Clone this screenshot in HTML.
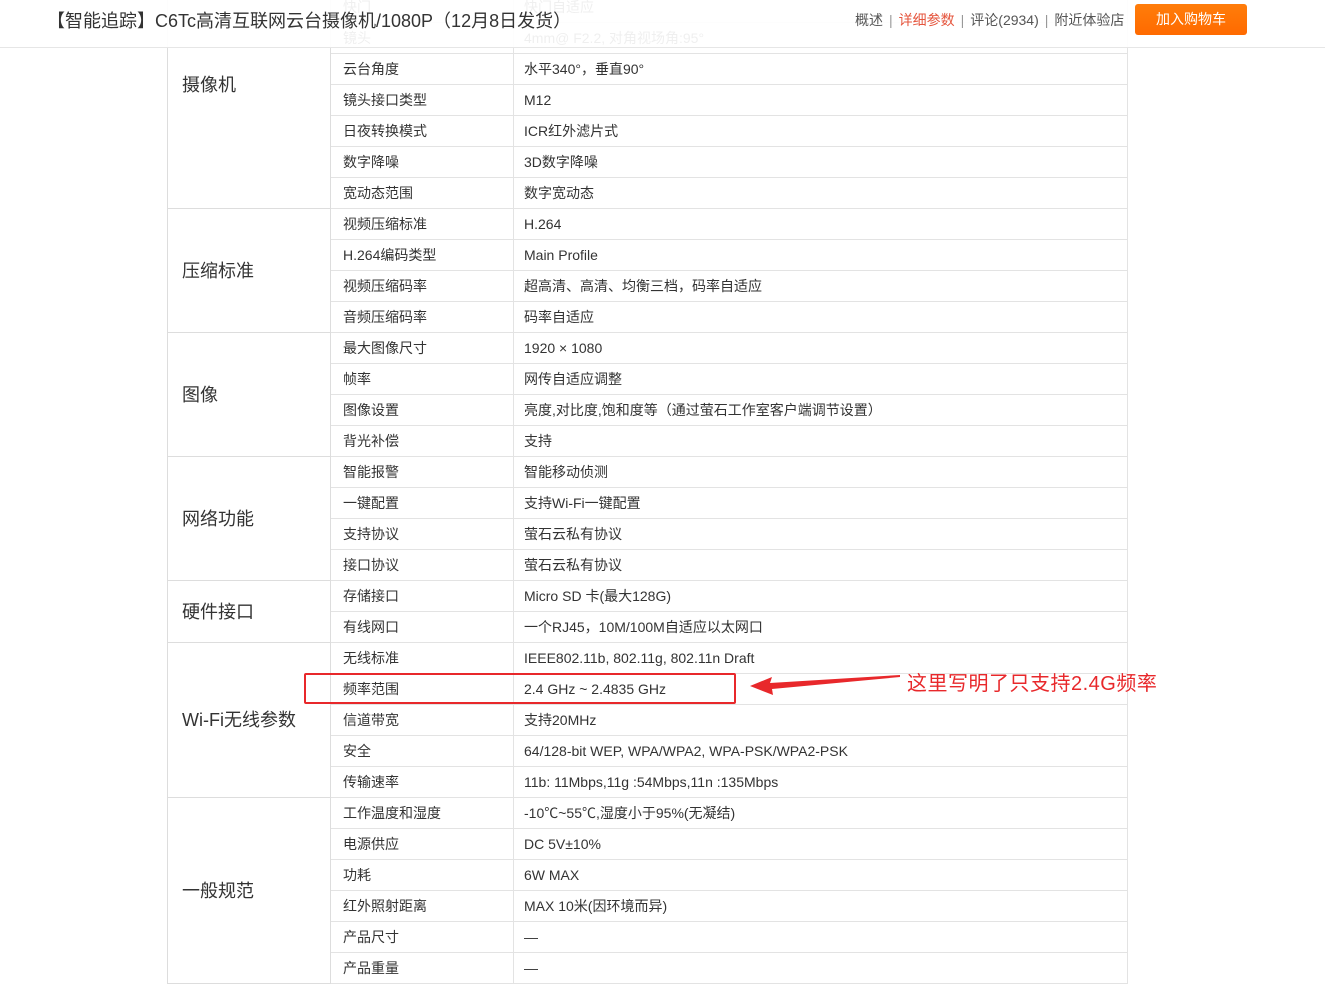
<!DOCTYPE html>
<html><head><meta charset="utf-8"><style>
*{margin:0;padding:0;box-sizing:border-box}
body{width:1325px;height:910px;overflow:hidden;background:#fff;position:relative;font-family:"Liberation Sans","Noto Sans CJK SC",sans-serif;color:#333}
table{position:absolute;left:167px;top:-40px;width:961px;border-collapse:collapse;table-layout:fixed}
td{border:1px solid #e3e3e3;height:30px;line-height:30px;font-size:14px;padding:0 0 0 12px;vertical-align:middle;white-space:nowrap;overflow:hidden}
td.g{font-size:18px;padding-left:14px;border-color:#ddd}
td.v{padding-left:10px}
#hd{position:absolute;left:0;top:0;width:1325px;height:48px;background:rgba(255,255,255,0.92);border-bottom:1px solid #e6e6e6}
#ttl{position:absolute;left:47px;top:9px;font-size:18px;color:#333;line-height:24px}
#nav{position:absolute;left:855px;top:11px;font-size:14px;color:#555;line-height:18px}
#nav .s{color:#999;margin:0 6px}
#nav .a{color:#e5553d}
#btn{position:absolute;left:1135px;top:4px;width:112px;height:31px;border-radius:3px;background:linear-gradient(#ff7d0a,#ff6a00);color:#fff;font-size:14px;line-height:31px;text-align:center}
#box{position:absolute;left:304px;top:673px;width:432px;height:31px;border:2px solid #e8282b;border-radius:2px}
#note{position:absolute;left:907px;top:672px;font-size:20px;color:#e8282b;line-height:24px;letter-spacing:0.5px}
</style></head><body>
<table>
<colgroup><col style="width:163px"><col style="width:183px"><col></colgroup>
<tr><td class="g" rowspan="8">摄像机</td><td>传感器类型</td><td class="v">1/3" Progressive Scan CMOS</td></tr>
<tr><td>快门</td><td class="v">快门自适应</td></tr>
<tr><td>镜头</td><td class="v">4mm@ F2.2, 对角视场角:95°</td></tr>
<tr><td>云台角度</td><td class="v">水平340°，垂直90°</td></tr>
<tr><td>镜头接口类型</td><td class="v">M12</td></tr>
<tr><td>日夜转换模式</td><td class="v">ICR红外滤片式</td></tr>
<tr><td>数字降噪</td><td class="v">3D数字降噪</td></tr>
<tr><td>宽动态范围</td><td class="v">数字宽动态</td></tr>
<tr><td class="g" rowspan="4">压缩标准</td><td>视频压缩标准</td><td class="v">H.264</td></tr>
<tr><td>H.264编码类型</td><td class="v">Main Profile</td></tr>
<tr><td>视频压缩码率</td><td class="v">超高清、高清、均衡三档，码率自适应</td></tr>
<tr><td>音频压缩码率</td><td class="v">码率自适应</td></tr>
<tr><td class="g" rowspan="4">图像</td><td>最大图像尺寸</td><td class="v">1920 × 1080</td></tr>
<tr><td>帧率</td><td class="v">网传自适应调整</td></tr>
<tr><td>图像设置</td><td class="v">亮度,对比度,饱和度等（通过萤石工作室客户端调节设置）</td></tr>
<tr><td>背光补偿</td><td class="v">支持</td></tr>
<tr><td class="g" rowspan="4">网络功能</td><td>智能报警</td><td class="v">智能移动侦测</td></tr>
<tr><td>一键配置</td><td class="v">支持Wi-Fi一键配置</td></tr>
<tr><td>支持协议</td><td class="v">萤石云私有协议</td></tr>
<tr><td>接口协议</td><td class="v">萤石云私有协议</td></tr>
<tr><td class="g" rowspan="2">硬件接口</td><td>存储接口</td><td class="v">Micro SD 卡(最大128G)</td></tr>
<tr><td>有线网口</td><td class="v">一个RJ45，10M/100M自适应以太网口</td></tr>
<tr><td class="g" rowspan="5">Wi-Fi无线参数</td><td>无线标准</td><td class="v">IEEE802.11b, 802.11g, 802.11n Draft</td></tr>
<tr><td>频率范围</td><td class="v">2.4 GHz ~ 2.4835 GHz</td></tr>
<tr><td>信道带宽</td><td class="v">支持20MHz</td></tr>
<tr><td>安全</td><td class="v">64/128-bit WEP, WPA/WPA2, WPA-PSK/WPA2-PSK</td></tr>
<tr><td>传输速率</td><td class="v">11b: 11Mbps,11g :54Mbps,11n :135Mbps</td></tr>
<tr><td class="g" rowspan="6">一般规范</td><td>工作温度和湿度</td><td class="v">-10℃~55℃,湿度小于95%(无凝结)</td></tr>
<tr><td>电源供应</td><td class="v">DC 5V±10%</td></tr>
<tr><td>功耗</td><td class="v">6W MAX</td></tr>
<tr><td>红外照射距离</td><td class="v">MAX 10米(因环境而异)</td></tr>
<tr><td>产品尺寸</td><td class="v">—</td></tr>
<tr><td>产品重量</td><td class="v">—</td></tr>
</table>
<div id="hd">
<div id="ttl">【智能追踪】C6Tc高清互联网云台摄像机/1080P（12月8日发货）</div>
<div id="nav">概述<span class="s">|</span><span class="a">详细参数</span><span class="s">|</span>评论(2934)<span class="s">|</span>附近体验店</div>
<div id="btn">加入购物车</div>
</div>
<div id="box"></div>
<svg style="position:absolute;left:748px;top:674px" width="155" height="22"><polygon points="2,12 24,3 22,9 152,1 152,3 24,15 25,21" fill="#e8282b"/></svg>
<div id="note">这里写明了只支持2.4G频率</div>
</body></html>
